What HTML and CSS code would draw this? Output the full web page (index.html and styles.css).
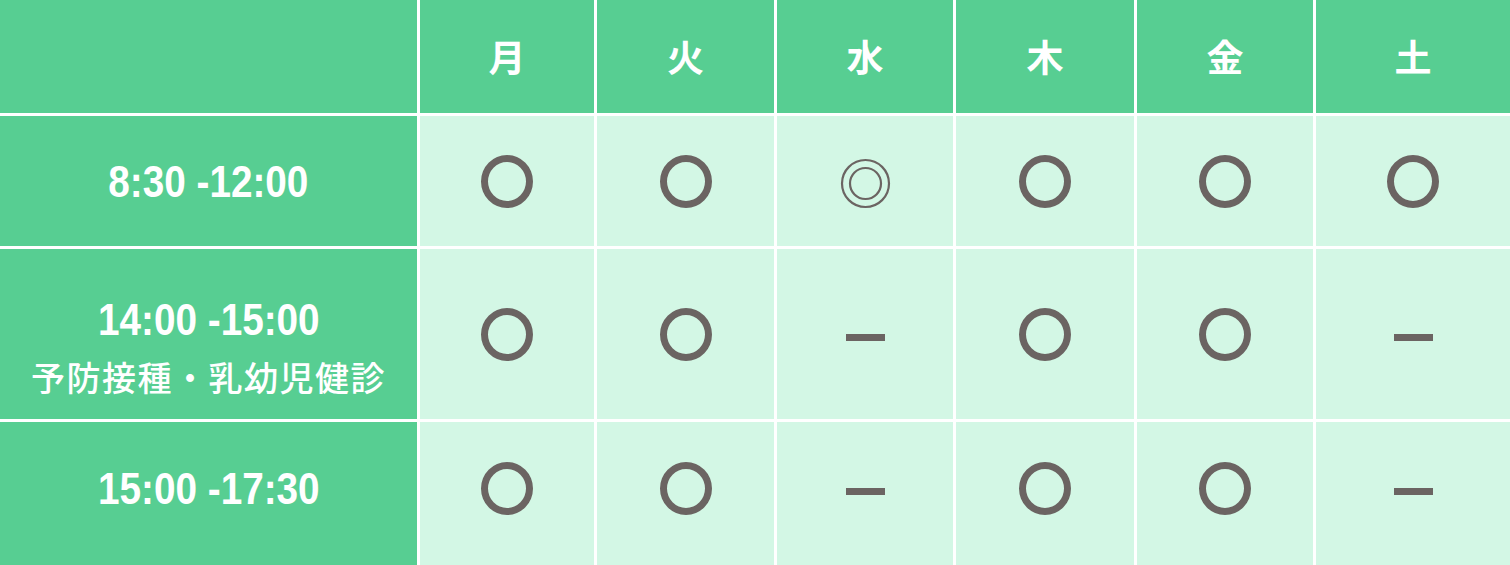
FILE: index.html
```html
<!DOCTYPE html>
<html lang="ja">
<head>
<meta charset="utf-8">
<title>診療時間</title>
<link rel="stylesheet" href="styles.css">
</head>
<body>
<div class="schedule">
  <div class="cell head corner"></div>
  <div class="cell head day">月</div>
  <div class="cell head day">火</div>
  <div class="cell head day">水</div>
  <div class="cell head day">木</div>
  <div class="cell head day">金</div>
  <div class="cell head day">土</div>

  <div class="cell time"><span class="hours">8:30 -12:00</span></div>
  <div class="cell mark"><span class="circle"></span></div>
  <div class="cell mark"><span class="circle"></span></div>
  <div class="cell mark">
    <svg class="double" width="51" height="51" viewBox="0 0 51 51"><circle cx="25.5" cy="25.5" r="23.5" fill="none" stroke="#6b6462" stroke-width="2.2"/><circle cx="25.5" cy="25.5" r="15.5" fill="none" stroke="#6b6462" stroke-width="2.2"/></svg>
  </div>
  <div class="cell mark"><span class="circle"></span></div>
  <div class="cell mark"><span class="circle"></span></div>
  <div class="cell mark"><span class="circle"></span></div>

  <div class="cell time two"><span class="hours">14:00 -15:00</span><span class="note">予防接種・乳幼児健診</span></div>
  <div class="cell mark"><span class="circle"></span></div>
  <div class="cell mark"><span class="circle"></span></div>
  <div class="cell mark"><span class="dash"></span></div>
  <div class="cell mark"><span class="circle"></span></div>
  <div class="cell mark"><span class="circle"></span></div>
  <div class="cell mark"><span class="dash"></span></div>

  <div class="cell time last"><span class="hours">15:00 -17:30</span></div>
  <div class="cell mark last"><span class="circle"></span></div>
  <div class="cell mark last"><span class="circle"></span></div>
  <div class="cell mark last"><span class="dash"></span></div>
  <div class="cell mark last"><span class="circle"></span></div>
  <div class="cell mark last"><span class="circle"></span></div>
  <div class="cell mark last"><span class="dash"></span></div>
</div>
</body>
</html>
```
FILE: styles.css
```css
html, body {
  margin: 0;
  padding: 0;
  background: #ffffff;
  overflow: hidden;
}

body {
  font-family: "Noto Sans CJK JP", "Noto Sans", sans-serif;
}

.schedule {
  display: grid;
  grid-template-columns: 417px 174px 177px 176px 178px 176px 1fr;
  grid-template-rows: 113px 130px 170px 143px;
  gap: 3px;
  width: 1510px;
  height: 565px;
  background: #ffffff;
}

.cell {
  display: flex;
  align-items: center;
  justify-content: center;
}

.head {
  background: #57ce92;
}

.day {
  color: #ffffff;
  font-size: 37px;
  font-weight: 700;
  line-height: 1;
}

.time {
  background: #57ce92;
  color: #ffffff;
  flex-direction: column;
}

.hours {
  display: inline-block;
  font-family: "Liberation Sans", Arial, sans-serif;
  font-weight: 700;
  font-size: 45px;
  line-height: 1;
  letter-spacing: 0;
  transform: scaleX(0.86);
  white-space: nowrap;
}

.two {
  padding-top: 22px;
}

.note {
  margin-top: 18px;
  font-size: 34px;
  font-weight: 500;
  line-height: 1;
  letter-spacing: 1.5px;
  white-space: nowrap;
}

.mark {
  background: #d3f7e5;
}

.last {
  padding-bottom: 10px;
}

.circle {
  display: block;
  width: 38px;
  height: 39px;
  border: 7px solid #6b6462;
  border-radius: 50%;
}

.double {
  display: block;
  margin-top: 4px;
}

.dash {
  display: block;
  width: 39px;
  height: 7px;
  background: #6b6462;
  margin-top: 6px;
}
```
